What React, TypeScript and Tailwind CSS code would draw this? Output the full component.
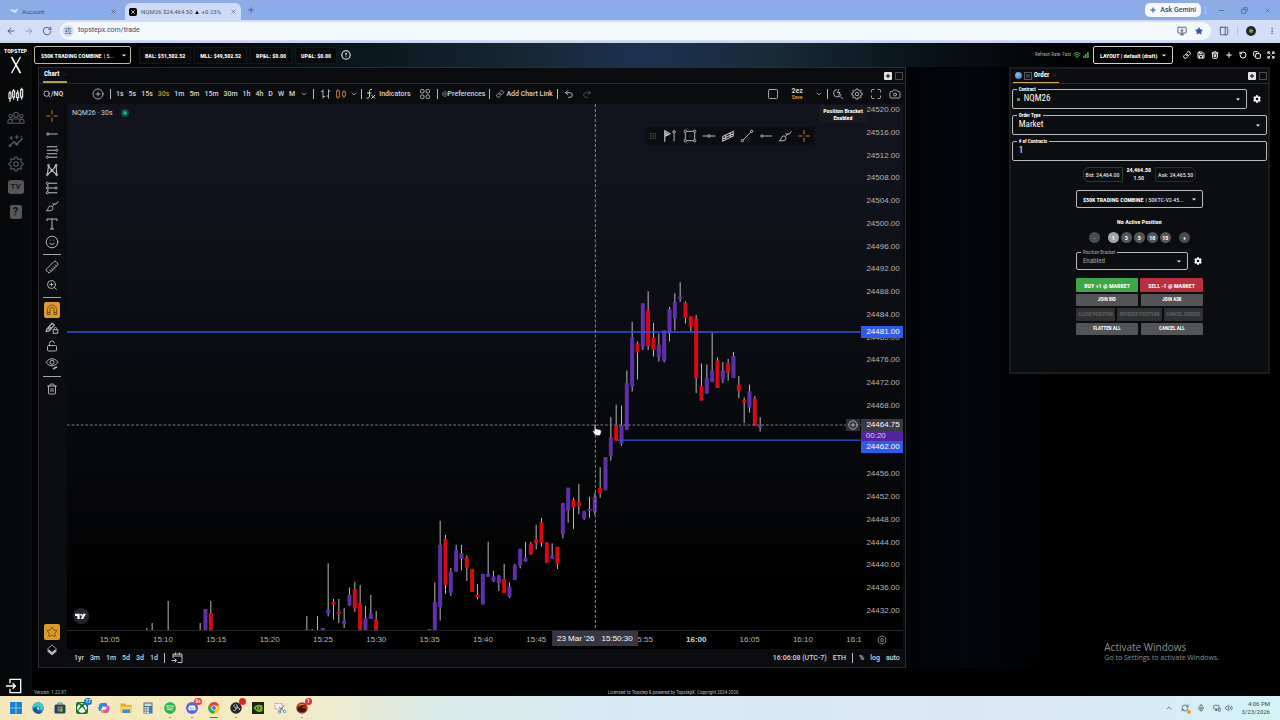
import React from "react";
import {
  ArrowLeft, ArrowRight, RotateCw, X, Plus, Minus, Star, Copy, MoreVertical, ChevronDown, ChevronUp,
  CirclePlus, Info, Search, Link, Undo2, Redo2, Square, Maximize, Camera, Wifi, Save, Trash2, RotateCcw, Expand,
  Smile, Ruler, ZoomIn, LockOpen, MonitorDown, Mic, Volume2,
  MonitorSmartphone, RefreshCw, Sparkle, SlidersHorizontal, PanelRight, Grip,
} from "lucide-react";
import { FaCog, FaSpotify, FaDiscord, FaXbox } from "react-icons/fa";

const COND = "font-['Roboto_Condensed','Liberation_Sans_Narrow',Roboto,sans-serif]";

type IcoProps = { children: React.ReactNode; className?: string };
const Ico = ({ children, className = "size-3.5" }: IcoProps) => (
  <svg viewBox="0 0 24 24" fill="none" stroke="currentColor" strokeWidth="1.6" className={className} aria-hidden="true">
    {children}
  </svg>
);

/* ---------- icons ---------- */
const CrossIcon = ({ className }: { className?: string }) => (
  <Ico className={className}><path d="M12 2v7M12 15v7M2 12h7M15 12h7M12 11.5v1" /></Ico>
);
const RayIcon = () => <Ico><circle cx="5" cy="12" r="2" /><path d="M7 12h15" /></Ico>;
const HLineIcon = () => <Ico><circle cx="12" cy="12" r="2.2" /><path d="M1 12h8.800M14.200 12H23" /></Ico>;
const FibIcon = () => (
  <Ico><path d="M3 3h18M3 9h15M3 15h18M6 21h15" strokeWidth="2" /><circle cx="20" cy="9" r="1.800" /><circle cx="4" cy="21" r="1.800" /></Ico>
);
const PatternIcon = () => (
  <Ico>
    <path d="M4 20 6 5l6 8 7-9 1 16-8-7-8 7" strokeWidth="2" />
    <circle cx="6" cy="4" r="1.700" /><circle cx="19" cy="4" r="1.700" /><circle cx="12" cy="13" r="1.700" />
    <circle cx="4" cy="20" r="1.700" /><circle cx="20" cy="20" r="1.700" />
  </Ico>
);
const ForecastIcon = () => (
  <Ico>
    <path d="M6 4h15M6 12h11M6 20h15M5 6v4M5 14v4" strokeWidth="1.800" /><circle cx="4" cy="4" r="1.800" /><circle cx="4" cy="12" r="1.800" />
    <circle cx="4" cy="20" r="1.800" /><circle cx="19" cy="12" r="1.800" />
  </Ico>
);
const BrushIcon = () => (
  <Ico><path d="M2 20c3 0 3-3 3.500-5 1-3 5-4 7-2s1 6-2 7c-2.500.8-5 0-8.500 0ZM12.500 13 17 8l2 1 4-5M13 7c1 2 2 3 4 1" /></Ico>
);
const TextIcon = () => <Ico className="size-3"><path d="M2 6V2h20v4M12 2v20M8 22h8" strokeWidth="2" /></Ico>;
const TrendIcon = () => <Ico><circle cx="4" cy="20" r="2" /><circle cx="20" cy="4" r="2" /><path d="M5.500 18.500 18.500 5.500" /></Ico>;
const RectIcon = () => (
  <Ico>
    <path d="M6 4h12M6 20h12M4 6v12M20 6v12" /><circle cx="4" cy="4" r="2" /><circle cx="20" cy="4" r="2" />
    <circle cx="4" cy="20" r="2" /><circle cx="20" cy="20" r="2" />
  </Ico>
);
const ChannelIcon = () => (
  <Ico><path d="M3 13 21 4v8L3 21v-8ZM3 17 21 8M8 10.500v8M16 6.500v8" strokeWidth="1.800" /></Ico>
);
const PositionIcon = () => (
  <Ico className="h-3.5 w-4">
    <path d="M3 22V3l9 5-9 5M3 6l6 4M3 9l5 2" strokeWidth="2" /><path d="M19 8v13" /><circle cx="19" cy="5" r="2.200" />
  </Ico>
);
const MagnetIcon = () => (
  <Ico className="size-3"><path d="M3 21V11a9 9 0 0 1 18 0v10h-5V11a4 4 0 0 0-8 0v10ZM3 17h5M16 17h5" /></Ico>
);
const PencilLockIcon = () => (
  <Ico><path d="m3 14 9-10 4 3-9 10-5 1ZM5 12l4 3M7 9.500l4 3.500" strokeWidth="2" /><rect x="14" y="15" width="8" height="6" /><path d="M16 15v-2a2 2 0 0 1 4 0v2" /></Ico>
);
const EyeBrushIcon = () => (
  <Ico><path d="M2 9c5-8 15-8 20 0-5 8-15 8-20 0Z" /><circle cx="12" cy="9" r="3.500" /><path d="M14 21c2-3 4-3 7-4" strokeWidth="2.400" /></Ico>
);
const FxIcon = () => (
  <Ico className="size-3"><path d="M14 3c-4-1-5 1-5 4v9c0 3-2 5-6 4M4 10h9M13 14l7 7M20 14l-7 7" strokeWidth="2" /></Ico>
);
const BarsIcon = () => <Ico className="size-3"><path d="M6 3v18M6 7H2M6 17h4M17 3v18M17 6h4M17 16h-4" /></Ico>;
const CandleTypeIcon = () => (
  <Ico className="size-3"><rect x="3" y="6" width="6" height="12" /><path d="M6 2v4M6 18v4M18 4v4M18 16v4" /><rect x="15" y="8" width="6" height="8" /></Ico>
);
const TemplateIcon = () => (
  <Ico className="size-3"><rect x="3" y="3" width="7" height="7" rx="2.500" /><rect x="14" y="3" width="7" height="7" rx="2.500" /><rect x="3" y="14" width="7" height="7" rx="2.500" /><rect x="14" y="14" width="7" height="7" rx="2.500" /></Ico>
);
const QuickSearchIcon = () => (
  <Ico className="size-3"><path d="M10 3a7.500 7.500 0 1 0 8 9M16.500 17l5 5M14 2l-3 7h5l-3 6" /></Ico>
);
const GoToIcon = () => (
  <Ico className="size-3"><path d="M4 12V4h18v17H13M4 8h18M9 1v5M17 1v5M1 17h9M7 13l4 4-4 4" strokeWidth="1.800" /></Ico>
);
const GearLine = ({ className = "size-3" }: { className?: string }) => (
  <Ico className={className}>
    <circle cx="12" cy="12" r="3.500" />
    <path d="m10 2-.6 2.600-2 .9L5 4 3.500 5.500 5 8l-.9 2L1.500 10.500v3L4.100 14l.9 2-1.500 2.500L5 20l2.400-1.500 2 .9L10 22h4l.6-2.600 2-.9L19 20l1.500-1.500L19 16l.9-2 2.600-.5v-3L19.900 10 19 8l1.500-2.500L19 4l-2.400 1.500-2-.9L14 2Z" />
  </Ico>
);
const SideCandles = () => (
  <Ico className="size-4">
    <rect x="1.500" y="9" width="3" height="8" /><rect x="7" y="6" width="3" height="9" /><rect x="13" y="9" width="3" height="7" /><rect x="19" y="4" width="3" height="11" />
    <path d="M3 6v3M3 17v5M8.500 3v3M8.500 15v4M14.500 5v4M14.500 16v5M20.500 1v3M20.500 15v4" />
  </Ico>
);
const PeopleIcon = () => (
  <Ico className="h-4 w-5">
    <circle cx="12" cy="7" r="3.500" /><circle cx="4" cy="9" r="2.500" /><circle cx="20" cy="9" r="2.500" />
    <path d="M6 20v-4a3 3 0 0 1 3-3h6a3 3 0 0 1 3 3v4ZM6 20H0v-3a3 3 0 0 1 3-3h3M18 20h6v-3a3 3 0 0 0-3-3h-3" />
  </Ico>
);
const InsightsIcon = () => (
  <Ico className="size-4">
    <path d="m3 19 6-6 4 4 9-9" strokeWidth="2" /><path d="M5 5v5M2.500 7.500h5M13 3v6M10 6h6M20 4v3" />
    <circle cx="3" cy="19" r="1.400" /><circle cx="13" cy="17" r="1.400" />
  </Ico>
);
const Caret = () => (
  <svg viewBox="0 0 8 4" className="h-[3px] w-1 shrink-0 fill-white" aria-hidden="true"><path d="M0 0h8L4 4Z" /></svg>
);
const BrandX = () => (
  <svg viewBox="0 0 12 20" className="h-[18px] w-3 stroke-white" fill="none" aria-hidden="true">
    <path d="M1 1 11 19" strokeWidth="2" /><path d="M11 1 1 19" strokeWidth="1.300" />
  </svg>
);

/* ---------- chart data: slot, high, low, body top, body bottom, direction ---------- */
type Candle = [number, number, number, number, number, 0 | 1];
const CANDLES: Candle[] = [
  [7, 627, 629, 629, 629, 1], [8, 622, 629, 629, 629, 1], [11, 600, 629, 629, 629, 1], [17, 622, 629, 629, 629, 1],
  [18, 608, 629, 608, 629, 1], [19, 600, 629, 612, 629, 0], [37, 615, 629, 628, 629, 1], [38, 628, 629, 629, 629, 1],
  [39, 615, 629, 629, 629, 1], [40, 627, 629, 627, 629, 1], [41, 562.5, 615.5, 608.5, 612, 1], [42, 598, 618.5, 601, 603.5, 0],
  [43, 598, 622, 610.5, 613, 0], [44, 607, 627, 619.5, 623, 1], [45, 586.5, 605, 594, 604.5, 1], [46, 581, 611, 588, 607.5, 0],
  [47, 584, 629, 602, 629, 0], [48, 605, 629, 617, 629, 1], [49, 594, 618, 612.5, 618, 1], [50, 610, 629, 618.5, 629, 0],
  [60, 628, 629, 628, 629, 1], [61, 581.5, 629, 601, 629, 1], [62, 520, 619.5, 544, 606, 1], [63, 534, 593, 538, 584, 0],
  [64, 567, 595, 571, 592, 1], [65, 544, 571, 549.5, 570.5, 1], [66, 544, 569.5, 552.5, 558, 1], [67, 554.5, 580, 557, 566.5, 0],
  [68, 568, 591, 568, 591, 0], [69, 583, 598.5, 593.5, 596.5, 0], [70, 573, 603.5, 573, 603.5, 1], [71, 541, 576, 573, 576, 1],
  [72, 570, 581, 575.5, 580.5, 1], [73, 574, 590, 575, 582, 1], [74, 563, 592, 578, 592, 0], [75, 581.5, 597, 585.5, 596, 1],
  [76, 563, 579, 564.5, 579, 1], [77, 548, 567.5, 548, 564.5, 1], [78, 541, 561, 557, 560.5, 1], [79, 541, 554, 543, 553.5, 0],
  [80, 524, 548.5, 538.5, 542, 0], [81, 517, 546, 521.5, 542, 0], [82, 541.5, 562, 541.5, 562, 0], [83, 542.5, 558, 554.5, 558, 1],
  [84, 546, 568, 546, 563.5, 0], [85, 502, 537.5, 502.5, 533.5, 1], [86, 487, 522, 487, 509.5, 1], [87, 497, 528, 499, 506.5, 0],
  [88, 483, 513.5, 501.5, 505.5, 0], [89, 510, 519, 510.5, 518, 1], [90, 496, 517, 508, 510, 1], [91, 492, 514, 496, 511, 1],
  [92, 466.5, 497, 487, 492.5, 0], [93, 456.5, 489.5, 456.5, 489.5, 1], [94, 416.5, 460, 436.5, 455.5, 1], [95, 404, 440, 424.5, 440, 0],
  [96, 405, 445, 424.5, 443, 1], [97, 370, 429, 382.5, 429, 1], [98, 321.5, 391, 337, 386, 1], [99, 341, 379, 343, 352, 0],
  [100, 303, 349.5, 303, 346.5, 1], [101, 291, 349.5, 310, 345.5, 0], [102, 322.5, 356, 337, 349.5, 0], [103, 333, 361, 344.5, 356.5, 1],
  [104, 330, 362, 330, 360.5, 1], [105, 306.5, 341, 309, 333, 1], [106, 293, 330, 301.5, 318, 1], [107, 282, 301.5, 296, 298.5, 1],
  [108, 301, 323, 302.5, 317.5, 0], [109, 316, 331, 316, 326.5, 0], [110, 314.5, 392.5, 318, 377.5, 0], [111, 363, 400, 385.5, 400, 0],
  [112, 364, 393, 377, 393, 1], [113, 332.5, 381.5, 370, 381.5, 1], [114, 357, 387, 360, 387.5, 0], [115, 361.5, 382.5, 370, 379, 1],
  [116, 358.5, 380, 362.5, 372, 0], [117, 351.5, 377.5, 355.5, 377.5, 1], [118, 375.5, 397.5, 384, 390, 0], [119, 397, 422.5, 399.5, 402, 0],
  [120, 384, 412, 391, 407, 1], [121, 395.5, 425, 398, 425, 0], [122, 416.5, 431, 425, 427, 1],
];
const slotX = (slot: number) => 109.5 + slot * 5.335;
const PRICES = Array.from({ length: 23 }, (_, i) => 24520 - i * 4);
const priceTop = (price: number) => `${((6 + (24520 - price) * 5.682) / 525) * 100}%`;
const TIMES = ["15:05", "15:10", "15:15", "15:20", "15:25", "15:30", "15:35", "15:40", "15:45", "", "15:55", "16:00", "16:05", "16:10", "16:15"];

function CandleChart() {
  return (
    <svg viewBox="67 104 794 525" preserveAspectRatio="none" className="block h-full w-full" role="img" aria-label="NQM26 30 second candles">
      {CANDLES.map(([slot, high, low, top, bottom, up]) => (
        <g key={slot}>
          <rect x={slotX(slot) - 0.5} y={high} width="1" height={low - high} fill="#b9b9b9" />
          <rect x={slotX(slot) - 2} y={top} width="4" height={bottom - top} fill={up ? "#5e30a8" : "#d60a12"} />
        </g>
      ))}
      <path d="M67 331.500H861M618 439.500H861" stroke="#2f55dd" strokeWidth="1.400" />
      <path d="M67 424.500H861" stroke="#7c7d88" strokeWidth="1" strokeDasharray="2.700 1.900" />
      <path d="M595.500 104V629" stroke="#8a8b93" strokeWidth="1" strokeDasharray="3 2" />
    </svg>
  );
}

/* ---------- browser ---------- */
function Browser() {
  return (
    <header className="font-[Roboto,sans-serif] text-[#3b4a66]">
      <div className="flex h-5 items-end bg-linear-to-b from-[#8eaae4] to-[#88aeea]">
        <a href="#account" className="flex h-[18px] w-[125px] items-center gap-1 pr-2 pl-2.5 text-[6px]">
          <svg viewBox="0 0 16 8" className="h-1 w-2 fill-[#dff3ff]" aria-hidden="true"><path d="M0 1h6l3 3 4-4h3l-4 7H8L5 4H2Z" /></svg>
          <span className="flex-1">Account</span>
          <X className="size-[7px]" />
        </a>
        <a href="#trade" className="flex h-[17px] w-[116px] items-center gap-1 rounded-t-md bg-[#cddbf8] pr-1 pl-1 text-[6px] text-[#4a5366]">
          <span className="flex size-2 items-center justify-center rounded-xs bg-black text-white"><X className="size-1.5" strokeWidth={3} /></span>
          <span className="flex-1 whitespace-nowrap">NQM26 $24,464.50 <b className="text-black">▲</b> +0.23%</span>
          <X className="size-[7px]" />
        </a>
        <button aria-label="New tab" className="ml-1.5 mb-1.5"><Plus className="size-2" /></button>
        <div className="flex-1" />
        <button className="mb-[3px] flex h-3.5 items-center gap-1 rounded-[5px] bg-[#f5f8fe] px-[5px] text-[7px] font-medium">
          <Sparkle className="size-1.5 fill-[#4470d8] text-[#4470d8]" /> Ask Gemini
        </button>
        <span className="mb-1.5 ml-1 h-2 w-px bg-[#b2c7f0]" />
        <div className="mb-1.5 ml-3 flex items-center gap-4 pr-[9px]">
          <button aria-label="Minimize"><Minus className="size-[7px]" /></button>
          <button aria-label="Restore"><Copy className="size-[7px] -scale-x-100" /></button>
          <button aria-label="Close"><X className="size-[7px]" /></button>
        </div>
      </div>
      <div className="flex h-[23px] items-center border-b-2 border-[#c9d6ee] bg-[#d3dffa] pr-1 pl-1.5">
        <button aria-label="Back" className="mr-2"><ArrowLeft className="size-2.5" /></button>
        <button aria-label="Forward" className="mr-2 opacity-50"><ArrowRight className="size-2.5" /></button>
        <button aria-label="Reload" className="mr-2"><RotateCw className="size-2.5" /></button>
        <div className="flex h-[18px] flex-1 items-center gap-1 rounded-full bg-[#f4f9fe] pr-2 pl-0.5">
          <span className="flex size-3 items-center justify-center rounded-full bg-[#d6e0f5]"><SlidersHorizontal className="size-2" /></span>
          <input aria-label="Address" defaultValue="topstepx.com/trade" className="min-w-0 flex-1 bg-transparent text-[7px] outline-none" />
          <MonitorDown className="size-2.5" />
          <Star className="ml-1 size-2 fill-[#3a57a5] text-[#3a57a5]" />
        </div>
        <button aria-label="Side panel" className="ml-2"><PanelRight className="size-2.5" /></button>
        <span className="ml-2 h-2 w-px bg-[#a9bbe0]" />
        <span className="ml-2 flex size-2.5 items-center justify-center rounded-full bg-[#23291f]"><span className="size-1 rounded-full bg-[#8c917b]" /></span>
        <button aria-label="Menu" className="ml-3"><MoreVertical className="size-2" /></button>
      </div>
    </header>
  );
}

/* ---------- app side rail ---------- */
function Rail() {
  return (
    <nav className="flex w-8 shrink-0 flex-col items-center border-r border-[#0c0d0f] bg-[#07080a] pt-1 pb-0.5 text-[#5a5b5d]">
      <a href="#home" className={`${COND} flex flex-col items-center text-[6px] leading-[7px] font-bold text-white`}>
        TOPSTEP
        <span className="mt-0.5"><BrandX /></span>
      </a>
      <div className="mt-[13px] flex flex-col items-center gap-[7px]">
        <a href="#chart" aria-label="Trade" className="text-white"><SideCandles /></a>
        <a href="#people" aria-label="Community"><PeopleIcon /></a>
        <a href="#insights" aria-label="Insights"><InsightsIcon /></a>
        <a href="#settings" aria-label="Settings"><GearLine className="size-4" /></a>
        <a href="#tv" className="mt-px flex h-3.5 w-4 items-center justify-center rounded-[3px] bg-[#555658] font-[Roboto,sans-serif] text-[8px] font-bold text-[#15161a]">TV</a>
        <a href="#help" className="mt-1 flex h-3.5 w-3 items-center justify-center rounded-xs bg-[#555658] font-[Roboto,sans-serif] text-[11px] font-bold text-[#101114]">?</a>
      </div>
      <div className="flex-1" />
      <button aria-label="Log out" className="mr-1 text-white">
        <Ico className="size-4"><path d="M6 8V2h16v20H6v-6M0 12h14M10 8l4 4-4 4" strokeWidth="2" /></Ico>
      </button>
    </nav>
  );
}

/* ---------- top bar ---------- */
const STATS = ["BAL: $51,502.52", "MLL: $49,502.52", "RP&L: $0.00", "UP&L: $0.00"];
function TopBar() {
  return (
    <div className={`${COND} flex h-6 items-center bg-[linear-gradient(to_right,#000_4%,#08131a_24%,#152630_38%,#1b3250_49%,#172a36_60%,#0a151c_70%,#000_84%)] pr-[5px] pl-0.5 text-[7px] text-white`}>
      <label className="flex h-[18px] w-[97px] items-center gap-0.5 rounded-xs border border-[#bdb9ad] bg-black pr-1 pl-1.5 text-[6px]">
        <span className="font-bold whitespace-nowrap">$50K TRADING COMBINE</span>
        <select className="min-w-0 flex-1 appearance-none bg-transparent outline-none"><option>| 5...</option></select>
        <Caret />
      </label>
      <div className="ml-2 flex gap-[3px]">
        {STATS.map((s) => (
          <span key={s} className="flex h-[17px] items-center border border-[#14161a] bg-[#07090b] px-[5px] text-[6px] font-bold whitespace-nowrap">{s}</span>
        ))}
      </div>
      <button aria-label="Account info" className="ml-1"><Info className="size-2.5 rotate-180" strokeWidth={2.500} /></button>
      <div className="flex-1" />
      <span className="text-[5px] text-[#a9abad]">Refresh Rate: Fast</span>
      <Wifi className="ml-0.5 size-2 text-[#3fae4b]" strokeWidth={3} />
      <svg viewBox="0 0 10 10" className="ml-0.5 size-1.5 fill-[#3fae4b]" aria-hidden="true"><path d="M0 6h2.500v4H0ZM3.500 3H6v7H3.500ZM7 0h2.500v10H7Z" /></svg>
      <div className="ml-1 flex h-[18px] w-20 items-center rounded-xs border border-[#d0d0d0] bg-black px-1.5">
        <select aria-label="Layout" className="min-w-0 flex-1 appearance-none bg-transparent text-[6px] font-bold outline-none"><option>LAYOUT | default (draft)</option></select>
        <Caret />
      </div>
      <div className="ml-2.5 flex items-center gap-1.5">
        {[
          ["Link", Link], ["Save", Save], ["Delete", Trash2], ["Add", Plus], ["Undo", RotateCcw], ["Windows", Copy], ["Expand", Expand],
        ].map(([name, I]) => {
          const Icon = I as typeof Plus;
          return <button key={name as string} aria-label={name as string}><Icon className="size-2" strokeWidth={3} /></button>;
        })}
      </div>
    </div>
  );
}

/* ---------- chart panel ---------- */
const Sep = () => <span className="h-2.5 w-px bg-[#b9babd]" />;
const HeadTools = () => (
  <div className="flex items-center gap-[3px] self-center">
    <button aria-label="Add tab" className="flex size-2 items-center justify-center rounded-[1px] bg-[#e4e4e4] text-black"><Plus className="size-1.5" strokeWidth={4} /></button>
    <button aria-label="Maximize" className="size-2 border border-[#4b4c4f]" />
  </div>
);
const PERIODS = ["1s", "5s", "15s", "30s", "1m", "5m", "15m", "30m", "1h", "4h", "D", "W", "M"];

function ChartToolbar() {
  return (
    <div className="flex h-5 items-center bg-[#0b0c0f] pr-1 pl-1 text-[7px] font-medium text-[#d4d5d8]">
      <button className="flex w-[49px] items-center font-bold"><Search className="size-2" strokeWidth={2.500} />/NQ</button>
      <button aria-label="Compare" className="mr-1.5"><CirclePlus className="size-3" strokeWidth={1.500} /></button>
      <Sep />
      <div className="ml-[5px] flex items-center gap-[5px]">
        {PERIODS.map((p) => (
          <button key={p} className={p === "30s" ? "text-[#d98c2b]" : ""}>{p}</button>
        ))}
      </div>
      <ChevronDown className="mx-[5px] size-2" /><Sep />
      <button aria-label="Bars" className="ml-1.5"><BarsIcon /></button>
      <button aria-label="Candles" className="ml-[3px] text-[#d98c2b]"><CandleTypeIcon /></button>
      <ChevronDown className="mx-[3px] size-2" /><Sep />
      <button className="ml-[3px] flex items-center gap-0.5"><FxIcon />Indicators</button>
      <button aria-label="Templates" className="mr-1.5 ml-2"><TemplateIcon /></button>
      <Sep />
      <button className="mx-1 flex items-center"><GearLine className="size-1.5" />Preferences</button>
      <Sep />
      <button className="mr-1 ml-1.5 flex items-center gap-0.5 whitespace-nowrap"><Link className="size-2" />Add Chart Link</button>
      <Sep />
      <button aria-label="Undo" className="ml-1.5"><Undo2 className="size-2.5" /></button>
      <button aria-label="Redo" className="ml-2 opacity-40"><Redo2 className="size-2.5" /></button>
      <div className="flex-1" />
      <button aria-label="Layout"><Square className="size-3" strokeWidth={1.500} /></button>
      <button className="ml-3 flex flex-col items-center text-[7px] leading-[7px] font-bold">2ez<span className="text-[5px] leading-[5px] text-[#d98c2b]">Save</span></button>
      <ChevronDown className="mr-1 ml-3 size-2" /><Sep />
      <div className="ml-1 flex gap-[7px]">
        <button aria-label="Quick search"><QuickSearchIcon /></button>
        <button aria-label="Chart settings"><GearLine /></button>
        <button aria-label="Fullscreen"><Maximize className="size-3" strokeWidth={1.500} /></button>
        <button aria-label="Snapshot"><Camera className="size-3" strokeWidth={1.500} /></button>
      </div>
    </div>
  );
}

const Tool = ({ label, children }: { label: string; children: React.ReactNode }) => (
  <button aria-label={label} className="flex h-4.5 w-full items-center justify-center">{children}</button>
);
const ToolSep = () => <span className="my-[3px] h-px w-[18px] bg-[#a5a6aa]" />;

function DrawingTools() {
  return (
    <div className="flex w-7 shrink-0 flex-col items-center bg-[#0b0c0f] pt-[3px] pr-0.5 pb-2 text-[#bcbdc2]">
      <Tool label="Cross"><span className="text-[#c8872b]"><CrossIcon className="size-3.5" /></span></Tool>
      <Tool label="Ray"><RayIcon /></Tool>
      <Tool label="Fibonacci"><FibIcon /></Tool>
      <Tool label="Patterns"><PatternIcon /></Tool>
      <Tool label="Forecast"><ForecastIcon /></Tool>
      <Tool label="Brush"><BrushIcon /></Tool>
      <Tool label="Text"><TextIcon /></Tool>
      <Tool label="Icons"><Smile className="size-3.5" strokeWidth={1.600} /></Tool>
      <ToolSep />
      <Tool label="Measure"><Ruler className="size-3.5 rotate-90" strokeWidth={1.600} /></Tool>
      <Tool label="Zoom in"><ZoomIn className="size-3" strokeWidth={1.800} /></Tool>
      <ToolSep />
      <Tool label="Magnet"><span className="flex size-4 items-center justify-center rounded-xs bg-[#dc9a2a] text-[#5f4312]"><MagnetIcon /></span></Tool>
      <Tool label="Stay in drawing mode"><PencilLockIcon /></Tool>
      <Tool label="Lock"><LockOpen className="size-3" strokeWidth={1.800} /></Tool>
      <Tool label="Hide"><EyeBrushIcon /></Tool>
      <ToolSep />
      <Tool label="Remove"><Trash2 className="size-3" strokeWidth={1.800} /></Tool>
      <div className="flex-1" />
      <Tool label="Favorites"><span className="flex size-4 items-center justify-center rounded-xs bg-[#dc9a2a] text-[#5f4312]"><Star className="size-3" strokeWidth={1.600} /></span></Tool>
      <Tool label="Object tree">
        <Ico className="size-3"><path d="m12 2 9 8-9 8-9-8Z" /><path d="m3 14 9 8 9-8-3-2-6 5-6-5Z" fill="currentColor" /></Ico>
      </Tool>
    </div>
  );
}

function Plot() {
  return (
    <div className="relative grid min-h-0 flex-1 grid-cols-[minmax(0,1fr)_42px] grid-rows-[minmax(0,1fr)_19px] bg-[linear-gradient(to_bottom,#12131e_0%,#10121b_20%,#0b0c11_45%,#050608_70%,#000_92%)] font-['Liberation_Sans',Arial,sans-serif] text-[8px] text-[#b4b5b9]">
      <div className="relative min-h-0 overflow-hidden">
        <CandleChart />
        <div className="absolute top-1 left-[5px] flex items-center gap-2 font-[Roboto,sans-serif] text-[7px] text-[#cfd0d4]">
          NQM26 · 30s
          <span className="flex size-2 items-center justify-center rounded-full bg-[#0c4a3d]"><span className="size-1 rounded-full bg-[#22ab8a]" /></span>
        </div>
        <div className="absolute top-[23px] right-[47px] flex h-[18px] items-center gap-[5px] rounded-xs bg-[#0c0d10] px-[3px] text-[#c2c3c7]">
          <Grip className="size-2 text-[#5a5b60]" />
          <PositionIcon /><RectIcon /><HLineIcon /><ChannelIcon /><TrendIcon /><RayIcon /><BrushIcon />
          <span className="text-[#c8872b]"><CrossIcon className="size-3.5" /></span>
        </div>
        <a href="#tradingview" aria-label="TradingView" className="absolute bottom-1.5 left-1.5 flex size-4 items-center justify-center rounded-full bg-[#24262c]">
          <svg viewBox="0 0 36 20" className="w-3 fill-white"><path d="M0 2h14v17H7V9H0ZM24 19h-7l7-17h9Z" /><circle cx="18.500" cy="5" r="3" /></svg>
        </a>
        <svg viewBox="0 0 16 20" className="absolute h-3 w-2.5 fill-white stroke-[#222]" style={{ left: "66.200%", top: "60.800%" }} aria-hidden="true">
          <path d="M4 1c1.500 0 2 1 2 2v5l7 1.500c1.500.4 2 1.200 2 2.500 0 3-1 7-3 7H6c-1.500-1-4-4.500-5-7 .5-1.200 1.700-1 2.500 0V3c0-1-.5-2 .5-2Z" />
        </svg>
      </div>
      <div className="relative flex min-h-0 flex-col justify-between pt-px pr-[3px] pb-[14px] text-right">
        {PRICES.map((p) => <span key={p} className={p === 24464 ? "invisible leading-[10px]" : "leading-[10px]"}>{p}.00</span>)}
        <span className="absolute inset-x-0 -mt-1.5 h-3 bg-[#2f5be8] pr-[3px] leading-3 text-white" style={{ top: priceTop(24481) }}>24481.00</span>
        <div className="absolute inset-x-0 -mt-1.5 flex flex-col text-white" style={{ top: priceTop(24464.75) }}>
          <span className="h-3 bg-[#383a45] pr-[3px] leading-3">24464.75</span>
          <span className="h-2.5 bg-[#54249c] pl-[5px] text-left leading-[10px] text-[#d9c9f5]">00:20</span>
          <span className="h-3 bg-[#2f5be8] pr-[3px] leading-3">24462.00</span>
        </div>
        <button aria-label="Add order" className="absolute -left-[15px] -mt-1.5 flex h-3 w-3.5 items-center justify-center bg-[#2f3039] text-[#d6d7db]" style={{ top: priceTop(24464.75) }}>
          <CirclePlus className="size-2.5" strokeWidth={1.800} />
        </button>
      </div>
      <div className="relative flex items-center overflow-hidden border-t border-[#25262b] pl-4">
        {TIMES.map((t) => (
          <span key={t} className={`shrink-0 basis-[6.857%] text-center ${t === "16:00" ? "font-bold text-[#d6d7da]" : ""}`}>{t}</span>
        ))}
        <span className="absolute top-0 flex h-[15px] -translate-x-1/2 items-center gap-[7px] bg-[#363743] px-[5px] whitespace-nowrap text-white" style={{ left: "66.500%" }}>
          <span>23 Mar '26</span><span>15:50:30</span>
        </span>
      </div>
      <button aria-label="Axis settings" className="flex items-center justify-center border-t border-[#25262b]">
        <Ico className="size-2.5"><path d="M12 2 21 7v10l-9 5-9-5V7Z" /><circle cx="12" cy="12" r="3.500" /></Ico>
      </button>
      <div className={`${COND} absolute top-px right-[36px] flex flex-col items-center rounded-xs bg-[#191a1f] px-1 py-0.5 text-[6px] leading-[7px] font-bold text-white`}>
        Position Bracket<span>Enabled</span>
      </div>
    </div>
  );
}

function ChartPanel() {
  return (
    <section className="flex min-h-0 min-w-0 flex-col border border-[#2b2c30] bg-[#0b0c0f] font-[Roboto,sans-serif]">
      <div className={`${COND} flex h-4 items-end border-b border-[#2b2c30] pr-0.5 pl-1 text-[7px]`}>
        <button className="flex h-full w-6 items-center gap-1 border-b-2 border-[#b8974f] pl-px font-bold whitespace-nowrap text-white">Chart <X className="size-[5px] text-[#55565a]" /></button>
        <div className="flex-1" />
        <HeadTools />
      </div>
      <ChartToolbar />
      <div className="flex min-h-0 flex-1">
        <DrawingTools />
        <div className="flex min-w-0 flex-1 flex-col pr-0.5">
          <Plot />
          <div className="flex h-[18px] items-center gap-1.5 bg-[#0b0c0f] pr-[3px] pl-[7px] text-[7px] font-medium text-[#d4d5d8]">
            {["1yr", "3m", "1m", "5d", "3d", "1d"].map((r) => <button key={r}>{r}</button>)}
            <Sep />
            <button aria-label="Go to date"><GoToIcon /></button>
            <div className="flex-1" />
            <button>16:06:08 (UTC-7)</button>
            <button>ETH</button>
            <Sep />
            <button>%</button>
            <button>log</button>
            <button>auto</button>
          </div>
        </div>
      </div>
    </section>
  );
}

/* ---------- order panel ---------- */
const FIELD = "relative flex h-5 flex-1 items-center rounded-xs border border-[#b9babc] pl-1.5 pr-1.5";
const LABEL = "absolute -top-1 left-1 bg-[#0b0d11] px-0.5 text-[5px] leading-[7px] font-bold text-white";
const GREY = "rounded-[1px] bg-[#535456] text-[5px] font-bold text-white";
const OFF = "h-[13px] flex-auto rounded-[1px] bg-[#303133]";

function OrderPanel() {
  return (
    <section className={`${COND} flex flex-col self-start border-2 border-[#1b1c1f] bg-[#0b0d11] pb-[37px] text-white`}>
      <div className="flex h-[15px] items-end border-b border-[#2b2c30] pr-px pl-0.5 text-[7px]">
        <button className="flex h-full items-center gap-0.5 border-b border-[#d5ab4e] px-0.5 font-bold">
          <span className="size-[7px] rounded-full bg-[radial-gradient(circle_at_35%_35%,#8dc1f5,#2a62b8)]" />
          <span className="flex size-2 items-center justify-center border border-[#57585b] text-[6px] font-normal text-[#8b8c8f]">H</span>
          Order
          <X className="ml-px size-[5px] text-[#55565a]" />
        </button>
        <div className="flex-1" />
        <HeadTools />
      </div>
      <div className="flex flex-col gap-1.5 px-px pt-[5px] text-[9px]">
        <div className="flex items-center">
          <div className={FIELD}>
            <label htmlFor="contract" className={LABEL}>Contract</label>
            <span className="mr-1 -ml-0.5 size-[3px] bg-[#46a24d]" />
            <select id="contract" className="min-w-0 flex-1 appearance-none bg-transparent outline-none"><option>NQM26</option></select>
            <Caret />
          </div>
          <button aria-label="Contract settings" className="flex w-5 justify-center"><FaCog className="size-2" /></button>
        </div>
        <div className="flex">
          <div className={FIELD}>
            <label htmlFor="type" className={LABEL}>Order Type</label>
            <select id="type" className="min-w-0 flex-1 appearance-none bg-transparent outline-none"><option>Market</option></select>
            <Caret />
          </div>
        </div>
        <div className="flex">
          <div className={FIELD}>
            <label htmlFor="qty" className={LABEL}># of Contracts</label>
            <input id="qty" defaultValue="1" className="min-w-0 flex-1 bg-transparent outline-none" />
          </div>
        </div>
      </div>
      <div className="mx-auto mt-[5px] flex items-center gap-1 text-[6px]">
        <span className="flex h-[15px] items-center rounded-l-md border border-[#1f4528] px-0.5">Bid: 24,464.00</span>
        <span className="flex flex-col items-center leading-2"><b>24,464.50</b><span className="font-medium">1.50</span></span>
        <span className="flex h-[15px] items-center rounded-r-md border border-[#4a1b22] px-0.5">Ask: 24,465.50</span>
      </div>
      <div className="mx-auto mt-2 flex w-[127px] flex-col">
        <label className="flex h-[18px] items-center gap-0.5 rounded-xs border border-[#b9babc] pr-1.5 pl-1.5 text-[6px]">
          <span className="font-bold whitespace-nowrap">$50K TRADING COMBINE</span>
          <select className="min-w-0 flex-1 appearance-none bg-transparent outline-none"><option>| 50KTC-V2-45...</option></select>
          <Caret />
        </label>
        <p className="mt-2.5 text-center text-[6px] leading-2 font-bold">No Active Position</p>
        <div className="mt-1.5 flex items-center justify-center gap-0.5 text-[6px] font-bold">
          <button className="mr-1.5 size-[11px] rounded-full bg-[#4a4b4d] leading-[11px] text-[#aaa]">-</button>
          {["1", "3", "5", "10", "15"].map((n) => (
            <button key={n} className={`size-[11px] rounded-full leading-[11px] ${n === "1" ? "bg-[#a3a4a6]" : "bg-[#555658]"}`}>{n}</button>
          ))}
          <button className="ml-1.5 size-[11px] rounded-full bg-[#4a4b4d] leading-[11px]">+</button>
        </div>
        <div className="mt-[9px] flex items-center">
          <div className="relative flex h-[18px] flex-1 items-center rounded-xs border border-[#b9babc] px-1.5 text-[7px] text-[#a9aaac]">
            <label htmlFor="bracket" className="absolute -top-1 left-1 bg-[#0b0d11] px-0.5 text-[5px] leading-[7px]">Position Bracket</label>
            <select id="bracket" className="min-w-0 flex-1 appearance-none bg-transparent outline-none"><option>Enabled</option></select>
            <Caret />
          </div>
          <button aria-label="Bracket settings" className="mr-px ml-1.5"><FaCog className="size-2" /></button>
        </div>
        <div className="mt-2 flex flex-col gap-0.5">
          <div className="grid grid-cols-2 gap-0.5 text-[6px] font-bold">
            <button className="h-3.5 rounded-[1px] bg-[#3fa548]">BUY +1 @ MARKET</button>
            <button className="h-3.5 rounded-[1px] bg-[#b92f3d]">SELL -1 @ MARKET</button>
          </div>
          <div className="grid grid-cols-2 gap-[3px]">
            <button className={`h-3 ${GREY}`}>JOIN BID</button>
            <button className={`h-3 ${GREY}`}>JOIN ASK</button>
          </div>
          <div className="flex gap-0.5 text-[5px] font-bold whitespace-nowrap text-[#606163]">
            <button disabled className={OFF}>CLOSE POSITION</button>
            <button disabled className={OFF}>REVERSE POSITION</button>
            <button disabled className={OFF}>CANCEL ORDERS</button>
          </div>
          <div className="grid grid-cols-2 gap-[3px]">
            <button className={`h-3 ${GREY}`}>FLATTEN ALL</button>
            <button className={`h-3 ${GREY}`}>CANCEL ALL</button>
          </div>
        </div>
      </div>
    </section>
  );
}

/* ---------- taskbar ---------- */
const Dot = ({ wide }: { wide?: boolean }) => (
  <span className={`absolute -bottom-1 left-1/2 h-px -translate-x-1/2 rounded-full ${wide ? "w-2 bg-[#1c78c8]" : "w-0.5 bg-[#8b8573]"}`} />
);
const Badge = ({ text, className }: { text: string; className: string }) => (
  <span className={`absolute -top-1 -right-1 flex h-[7px] min-w-[7px] items-center justify-center rounded-full px-px text-[5px] font-bold text-white ${className}`}>{text}</span>
);
function Taskbar() {
  return (
    <footer className="flex h-6 shrink-0 items-center bg-[linear-gradient(to_right,#f6e7bd_0%,#f5ebc0_20%,#eeeccf_26%,#d9ebe8_34%,#d6e9f4_50%,#dbe7f2_80%,#d3f3f6_100%)] px-2.5 font-[Roboto,sans-serif] text-[6px] text-[#3d4650]">
      <div className="flex items-center gap-[10px] [&>button]:relative [&>button]:flex [&>button]:size-3 [&>button]:items-center [&>button]:justify-center">
        <button aria-label="Start"><svg viewBox="0 0 12 12" className="size-3 fill-[#1683d8]"><path d="M0 0h5.700v5.700H0ZM6.300 0H12v5.700H6.300ZM0 6.300h5.700V12H0ZM6.300 6.300H12V12H6.300Z" /></svg></button>
        <button aria-label="Edge"><svg viewBox="0 0 24 24" className="size-3"><circle cx="12" cy="12" r="11.500" fill="#1b6fc4" /><path d="M1 10C3-2 22-3 23.500 10c.3 5-4 7-8 6 2-2 1-7-4-7C7 8.500 4 10 1 14Z" fill="#3ecbc0" /><path d="M9 12c-2 6 3 11 12 8-5 6-16 4-17-4 0-3 3-5 5-4Z" fill="#155196" /><path d="M10 11c3-2 6 1 4 5-2-.5-4-2-4-5Z" fill="#f4ecca" /></svg></button>
        <button aria-label="Store"><svg viewBox="0 0 24 24" className="size-3"><path d="M8 5V2h8v3" stroke="#2191d8" strokeWidth="2" fill="none" /><rect x="1" y="5" width="22" height="18" rx="3" fill="#20435f" /><path d="M7 9h4.500v4.500H7Z" fill="#e85b3a" /><path d="M12.500 9H17v4.500h-4.500Z" fill="#83b93c" /><path d="M7 14.500h4.500V19H7Z" fill="#2ca4e5" /><path d="M12.500 14.500H17V19h-4.500Z" fill="#f5bc2e" /></svg></button>
        <button aria-label="Xbox"><span className="flex size-3 items-center justify-center rounded-xs bg-[#17752a]"><FaXbox className="size-2.5 text-white" /></span><Badge text="17" className="bg-[#2271b8]" /></button>
        <button aria-label="Copilot"><svg viewBox="0 0 24 24" className="size-3"><path d="M8 2h8l3 7H9l-4 9c-4 0-5-3-4-7 1-5 2-9 7-9Z" fill="#2a8be0" /><path d="M16 22H8l-3-6h10l4-9c4 0 5 3 4 7-1 5-2 8-7 8Z" fill="#d956a4" /><path d="M13 2h3l3 7h-5Z" fill="#7a4fd8" /><path d="m5 16 5 0 2 6H9Z" fill="#f3a33b" /></svg></button>
        <button aria-label="File Explorer"><svg viewBox="0 0 24 24" className="size-3"><path d="M1 3h8l3 3h11v15H1Z" fill="#e5a82c" /><path d="M1 9h22v12H1Z" fill="#fbd25a" /><path d="M5 15h15v7H5Z" fill="#3b8fd8" /></svg></button>
        <button aria-label="Calculator"><svg viewBox="0 0 24 24" className="size-3"><rect x="3" y="1" width="18" height="22" rx="1" fill="#5a6873" /><path d="M5 3h14v5H5Z" fill="#bfe3f3" /><path d="M5 10h4v3H5ZM10 10h4v3h-4ZM5 14.500h4v3H5ZM10 14.500h4v3h-4ZM5 19h4v3H5ZM10 19h4v3h-4Z" fill="#e8eef2" /><path d="M15 10h4v12h-4Z" fill="#2a8bd0" /></svg></button>
        <button aria-label="Spotify"><FaSpotify className="size-3 text-[#1fb855]" /><Dot /></button>
        <button aria-label="Discord"><span className="flex size-3 items-center justify-center rounded-full bg-[#5865e8]"><FaDiscord className="size-2 text-white" /></span><Badge text="9+" className="bg-[#d8444c]" /><Dot /></button>
        <button aria-label="Chrome"><svg viewBox="0 0 24 24" className="size-3"><circle cx="12" cy="12" r="11.500" fill="#f9c62d" /><path d="M2 6.500C7-2 18-2 22.500 7H12c-3 0-5 2-5 5Z" fill="#df4334" /><path d="M1.800 6.500C-2 13 2 22.500 11 23.500l5-9c-3 4-8 2-9-1Z" fill="#32a350" /><circle cx="12" cy="12" r="5.200" fill="#fff" /><circle cx="12" cy="12" r="4" fill="#3d7de8" /></svg><Dot wide /></button>
        <button aria-label="OBS Studio"><svg viewBox="0 0 24 24" className="size-3"><circle cx="12" cy="12" r="11.500" fill="#26252a" /><path d="M12 5a4 4 0 0 1 1 7c4-2 7 1 6 4M12 12c1 4-2 6-5 5M12 12C8 11 7 7 9 5" stroke="#d4d4d4" strokeWidth="2" fill="none" /></svg><Badge text="" className="bg-[#e0222a]" /><Dot /></button>
        <button aria-label="NVIDIA"><svg viewBox="0 0 24 24" className="size-3"><path d="M0 0h24v24H0Z" fill="#1c2410" /><path d="M3 12c4-7 12-8 18-5v11c-7 4-14 1-18-6Z" fill="#76b51c" /><path d="M7 12c3-4 7-4 10 0-3 4-7 4-10 0Z" fill="#1c2410" /><circle cx="12" cy="12" r="2" fill="#9ad43a" /></svg></button>
        <button aria-label="Snipping Tool"><svg viewBox="0 0 24 24" className="size-3" fill="none"><rect x="2" y="3" width="14" height="11" fill="#f4f4f4" stroke="#c25058" strokeWidth="1.500" strokeDasharray="2 1.500" /><path d="m10 10 10 8M20 7 11 19" stroke="#5d7896" strokeWidth="2" /><circle cx="21" cy="19" r="2.500" stroke="#5c8bc4" strokeWidth="2" /><circle cx="11" cy="20" r="2.500" stroke="#5c8bc4" strokeWidth="2" /></svg></button>
        <button aria-label="Game"><svg viewBox="0 0 24 24" className="size-3"><circle cx="12" cy="12" r="11.500" fill="#b3341c" /><path d="M2 15c3-8 12-11 18-8-5 0-8 3-8 6 4-1 7 0 9 3-6 6-15 6-19-1Z" fill="#3d1510" /><path d="M4 9c3-5 9-6 13-4-5 0-9 2-13 4Z" fill="#f39a3c" /></svg><Badge text="1" className="bg-[#dc3038]" /><Dot /></button>
      </div>
      <div className="flex-1" />
      <div className="flex items-center gap-2">
        <ChevronUp className="size-2" />
        <span className="relative"><RefreshCw className="size-2" /><span className="absolute -right-0.5 -bottom-0.5 size-1 rounded-full bg-[#ee9a1c]" /></span>
        <Mic className="size-2" />
        <span className="flex items-center gap-1"><MonitorSmartphone className="size-2" /><Volume2 className="size-2" /></span>
        <span className="flex flex-col items-end leading-2"><span>4:06 PM</span><span>3/23/2026</span></span>
      </div>
    </footer>
  );
}

export default function App() {
  return (
    <div className="flex h-screen min-h-[600px] min-w-[1000px] flex-col bg-black">
      <Browser />
      <div className="flex min-h-0 flex-1">
        <Rail />
        <div className="flex min-w-0 flex-1 flex-col">
          <TopBar />
          <main className="grid min-h-0 flex-1 grid-cols-[867fr_261fr] grid-rows-[minmax(0,1fr)] gap-x-[103px] bg-[linear-gradient(to_right,#000_65%,#01060b_75%,#000_82%)] pr-2.5 pl-1.5">
            <ChartPanel />
            <OrderPanel />
          </main>
          <div className={`${COND} flex h-7 items-end pb-px pl-0.5 text-[5px] leading-[6px] text-[#b5b5b5]`}>
            <span>Version: 1.22.87</span>
            <span className="flex-1 text-center">Licensed to Topstep & powered by TopstepX. Copyright 2024-2026</span>
          </div>
        </div>
      </div>
      <Taskbar />
      <aside className="pointer-events-none absolute right-[61px] bottom-[57px] font-['Open_Sans','Noto_Sans',sans-serif] text-[#8f8f8f]">
        <p className="text-[10px] leading-3">Activate Windows</p>
        <p className="text-[7px] leading-[10px]">Go to Settings to activate Windows.</p>
      </aside>
    </div>
  );
}
